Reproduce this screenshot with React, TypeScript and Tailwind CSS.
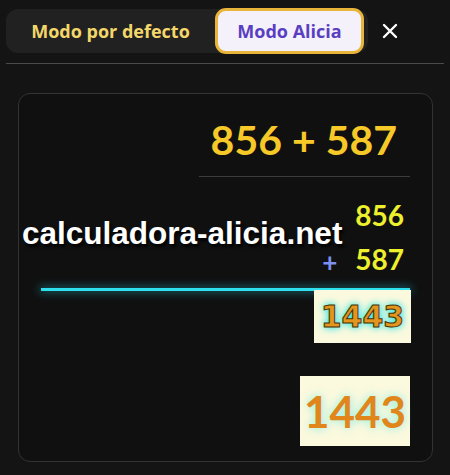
import React from "react";

export default function App() {
  return (
    <div className="w-[450px] h-[475px] bg-[#141414] overflow-hidden relative" style={{ fontFamily: "'Open Sans', 'Liberation Sans', sans-serif" }}>
      {/* Top bar */}
      <div className="flex items-center pl-[6px] pt-[8px]">
        <div className="flex items-center h-[44px] w-[362px] rounded-[12px] bg-[#212121] mt-[1px]">
          <button className="w-[209px] h-[44px] text-[18px] font-bold text-[#f3d76a] leading-none">
            Modo por defecto
          </button>
          <button className="w-[149px] h-[46px] rounded-[11px] border-[3px] border-[#e9b43a] bg-[#f4f1fb] text-[18px] font-bold text-[#5a3ec2] leading-none">
            Modo Alicia
          </button>
        </div>
        <div className="ml-[14px] mt-[1px] text-white">
          <svg width="16" height="16" viewBox="0 0 16 16">
            <path d="M2 2 L14 14 M14 2 L2 14" stroke="white" strokeWidth="2.4" strokeLinecap="round" />
          </svg>
        </div>
      </div>
      <div className="mx-[6px] mt-[10px] h-px bg-[#4a4a4a]" />

      {/* Card */}
      <div className="relative mx-[18px] mt-[29px] w-[415px] h-[369px] rounded-[12px] border border-[#333333] bg-[#101010] pl-[22px] pr-[22px]">
        <div className="flex flex-col items-end">
          <div className="mt-[16px] pr-[13px] text-[41px] font-bold leading-[60px] text-[#f7c928]" style={{ fontFamily: "Lato, sans-serif" }}>
            856 + 587
          </div>
          <div className="mt-[6px] w-[211px] h-px bg-[#3c3c3c]" />
          <div className="mt-[16px] pr-[6px] flex flex-col items-end text-[28px] font-bold leading-[44px] text-[#eef02e]" style={{ fontFamily: "Lato, sans-serif" }}>
            <div>856</div>
            <div className="flex items-center h-[44px]">
              <span className="text-[26px] leading-[20px] font-bold text-[#7c8ff0] mr-[18px] translate-y-[3px]">+</span>
              <span>587</span>
            </div>
          </div>
          <div className="mt-[7px] w-full h-[3px] bg-[#2ee0ee] shadow-[0_0_8px_2px_rgba(34,211,238,0.35)]" />
          <div className="-mt-[1px] mr-[-1px] w-[97px] h-[53px] bg-[#fbf9de] flex items-center justify-center">
            <span
              className="text-[30px] font-bold text-[#e3951f] leading-none [-webkit-text-stroke:1px_#4a3300] [text-shadow:0_0_6px_#3ee6e6,0_0_10px_#3ee6e6]"
              style={{ fontFamily: "'DejaVu Sans', sans-serif" }}
            >
              1443
            </span>
          </div>
          <div className="mt-[33px] w-[110px] h-[70px] bg-[#fbf9de] flex items-center justify-center">
            <span
              className="text-[44px] font-bold text-[#e0861a] leading-none [text-shadow:0_0_10px_rgba(62,230,230,0.6)]"
              style={{ fontFamily: "Lato, sans-serif" }}
            >
              1443
            </span>
          </div>
        </div>

        {/* Watermark */}
        <div
          className="absolute left-[3px] top-[124px] text-[31.5px] font-bold text-white leading-none [text-shadow:2px_3px_3px_rgba(0,0,0,0.9)]"
          style={{ fontFamily: "'Liberation Sans', sans-serif" }}
        >
          calculadora-alicia.net
        </div>
      </div>
    </div>
  );
}
